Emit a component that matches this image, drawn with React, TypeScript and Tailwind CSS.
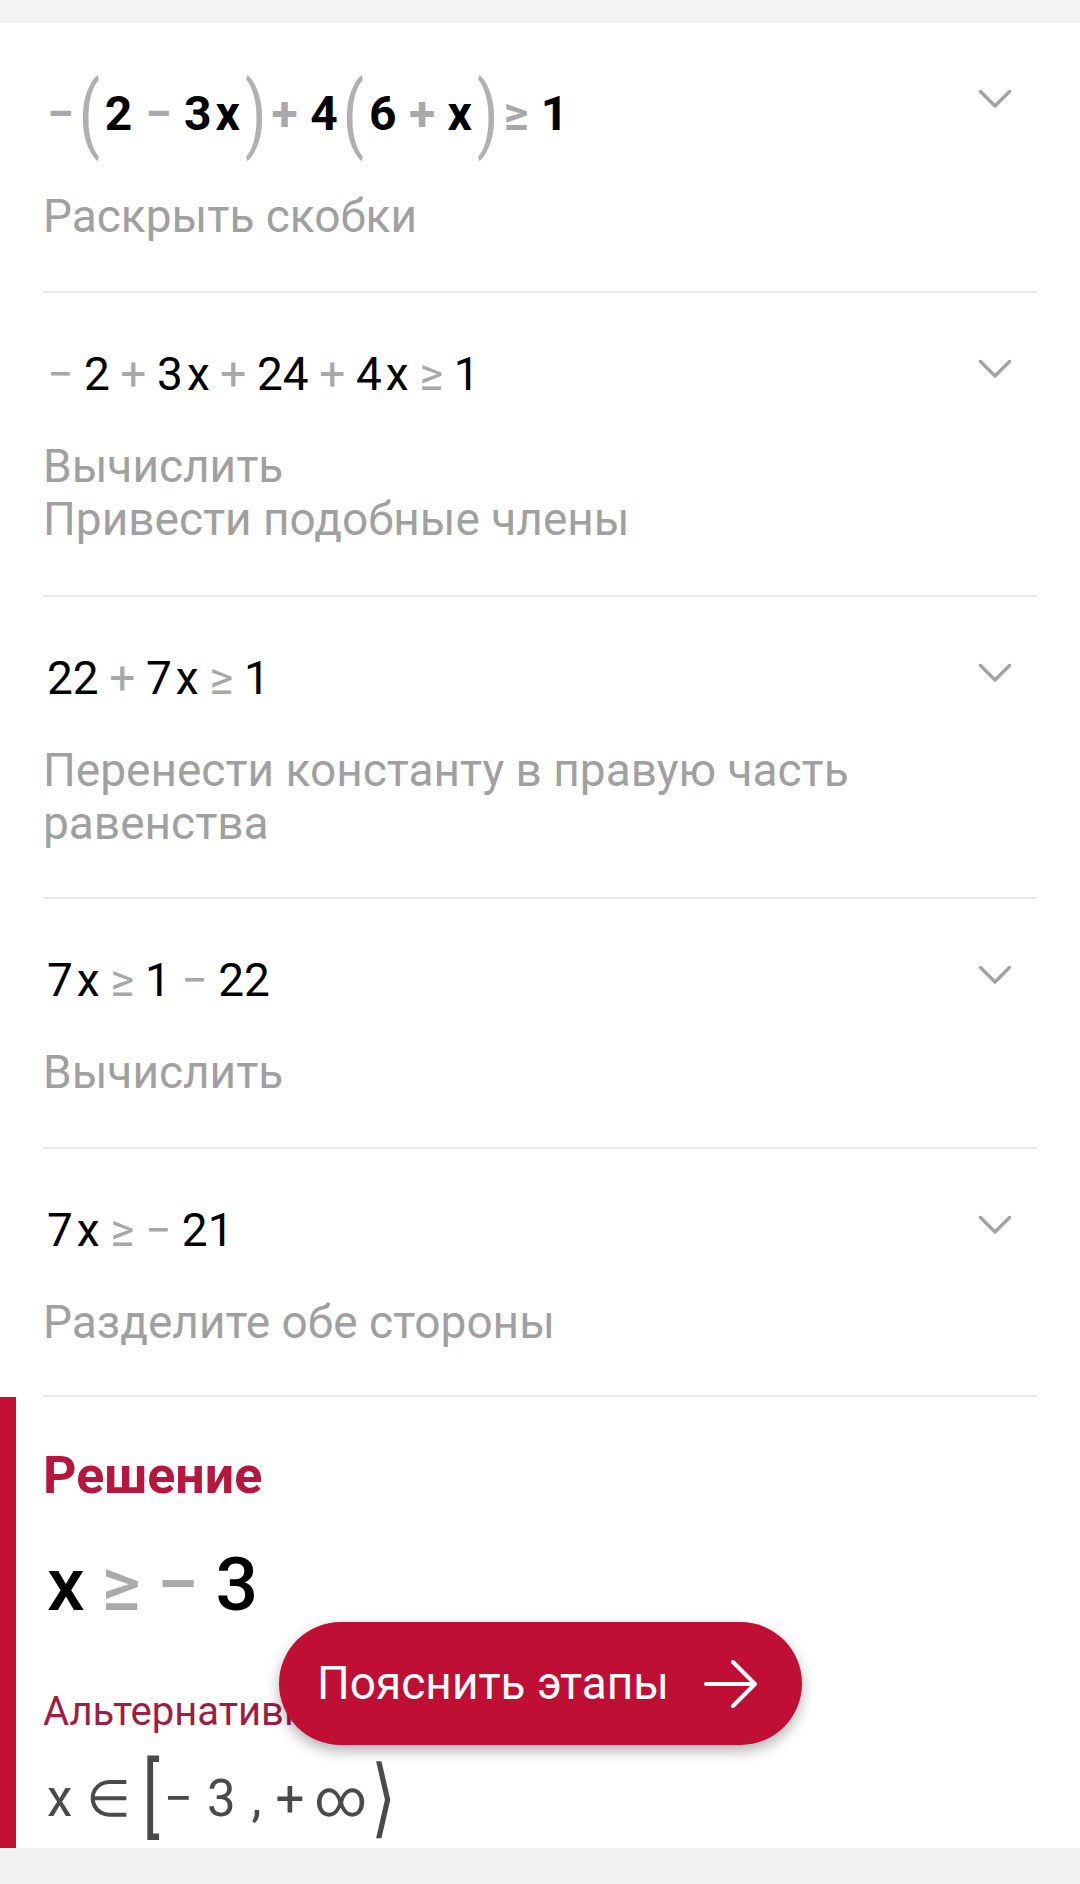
import React from 'react'

type Tok = { t: string; k: 'n' | 'o' | 'p' }

const n = (t: string): Tok => ({ t, k: 'n' })
const o = (t: string): Tok => ({ t, k: 'o' })
const p = (t: string): Tok => ({ t, k: 'p' })

const STEPS: { expr: Tok[]; desc: string[]; bold?: boolean; pb: string }[] = [
  {
    expr: [o('−'), p('('), n('2'), o('−'), n('3'), n('x'), p(')'), o('+'), n('4'), p('('), n('6'), o('+'), n('x'), p(')'), o('≥'), n('1')],
    desc: ['Раскрыть скобки'],
    bold: true,
    pb: 'pb-[48px]',
  },
  {
    expr: [o('−'), n('2'), o('+'), n('3'), n('x'), o('+'), n('24'), o('+'), n('4'), n('x'), o('≥'), n('1')],
    desc: ['Вычислить', 'Привести подобные члены'],
    pb: 'pb-[49px]',
  },
  {
    expr: [n('22'), o('+'), n('7'), n('x'), o('≥'), n('1')],
    desc: ['Перенести константу в правую часть равенства'],
    pb: 'pb-[47px]',
  },
  {
    expr: [n('7'), n('x'), o('≥'), n('1'), o('−'), n('22')],
    desc: ['Вычислить'],
    pb: 'pb-[48px]',
  },
  {
    expr: [n('7'), n('x'), o('≥'), o('−'), n('21')],
    desc: ['Разделите обе стороны'],
    pb: 'pb-[46px]',
  },
]

function Chevron() {
  return (
    <svg width="34" height="20" viewBox="0 0 34 20" fill="none" className="mt-[13px] mr-[25px] shrink-0">
      <path d="M2.5 2.5 L17 17 L31.5 2.5" stroke="#a3a3a3" strokeWidth="3.5" strokeLinecap="round" strokeLinejoin="round" />
    </svg>
  )
}

// spacing before a token depends on its neighbour
function gapClass(prev: Tok | undefined, tok: Tok, bold?: boolean) {
  if (!prev) return ''
  if (tok.k === 'p' || prev.k === 'p') return bold ? 'ml-[5px]' : 'ml-[4px]'
  if (tok.k === 'o' || prev.k === 'o') return bold ? 'ml-[0.26em]' : 'ml-[0.23em]'
  return 'ml-[4px]'
}

function Expr({ tokens, bold }: { tokens: Tok[]; bold?: boolean }) {
  return (
    <div
      className={
        bold
          ? 'flex items-center h-[76px] pl-1 text-[48px] leading-[56px] font-bold'
          : 'flex items-center h-[56px] pl-1 text-[46px] leading-[56px]'
      }
    >
      {tokens.map((tok, i) => {
        const g = gapClass(tokens[i - 1], tok, bold)
        if (tok.k === 'n') return <span key={i} className={`text-black ${g}`}>{tok.t}</span>
        if (tok.k === 'o') return <span key={i} className={`text-[#a8a8a8] ${g}`}>{tok.t}</span>
        return (
          <span key={i} className={`inline-block text-[#b0b0b0] font-normal text-[62px] leading-[76px] scale-y-[1.35] ${g}`}>
            {tok.t}
          </span>
        )
      })}
    </div>
  )
}

export default function App() {
  return (
    <div className="w-[1080px] min-h-[1884px] bg-white overflow-hidden font-['Roboto','DejaVu_Sans',sans-serif]">
      <div className="h-[23px] bg-[#f4f4f4]" />

      {/* Steps */}
      {STEPS.map((step, i) => (
        <div key={i} className={`mx-[43px] border-b-2 border-[#e8e8e8] pt-[53px] ${step.pb} flex justify-between`}>
          <div className="flex flex-col">
            <Expr tokens={step.expr} bold={step.bold} />
            <div className="mt-[38px] text-[46px] leading-[53px] text-[#a0a0a0] max-w-[900px]">
              {step.desc.map((d, j) => (
                <p key={j}>{d}</p>
              ))}
            </div>
          </div>
          <Chevron />
        </div>
      ))}

      {/* Solution */}
      <div className="relative border-l-[16px] border-[#c01034] pl-[27px] pt-[49px] pb-[7px]">
        <h2 className="text-[52px] leading-[60px] font-bold text-[#b5173e]">Решение</h2>
        <div className="mt-[41px] h-[75px] flex items-center pl-1 text-[75px] leading-[75px] font-medium">
          <span className="text-black">x</span>
          <span className="text-[#aaaaaa] ml-[0.22em]">≥</span>
          <span className="text-[#aaaaaa] ml-[0.22em]">−</span>
          <span className="text-black ml-[0.22em]">3</span>
        </div>
        <p className="mt-[67px] text-[40px] leading-[46px] text-[#a01d42]">Альтернативная форма</p>
        <div className="mt-[22px] h-[84px] flex items-center pl-1 text-[51px] leading-[60px] text-[#4a4a4a]">
          <span>x</span>
          <span className="ml-[14px]">∈</span>
          <span className="ml-[12px] inline-block text-[64px] leading-[84px] scale-y-[1.35]">[</span>
          <span className="ml-[4px]">−</span>
          <span className="ml-[14px]">3</span>
          <span className="ml-[16px]">,</span>
          <span className="ml-[14px]">+</span>
          <span className="ml-[10px]">∞</span>
          <span className="ml-[4px] inline-block text-[64px] leading-[84px] scale-y-[1.35]">⟩</span>
        </div>

        <button className="absolute left-[263px] top-[225px] w-[523px] h-[123px] rounded-full bg-[#c00f35] shadow-[0_6px_14px_rgba(0,0,0,0.3)] flex items-center justify-between pl-[38px] pr-[44px] text-white text-[46px]">
          <span>Пояснить этапы</span>
          <svg width="54" height="48" viewBox="0 0 54 48" fill="none">
            <path d="M2 24 H51 M29 2 L51 24 L29 46" stroke="white" strokeWidth="4" strokeLinecap="round" strokeLinejoin="round" />
          </svg>
        </button>
      </div>

      <div className="h-[36px] bg-[#f1f1f1]" />
    </div>
  )
}
